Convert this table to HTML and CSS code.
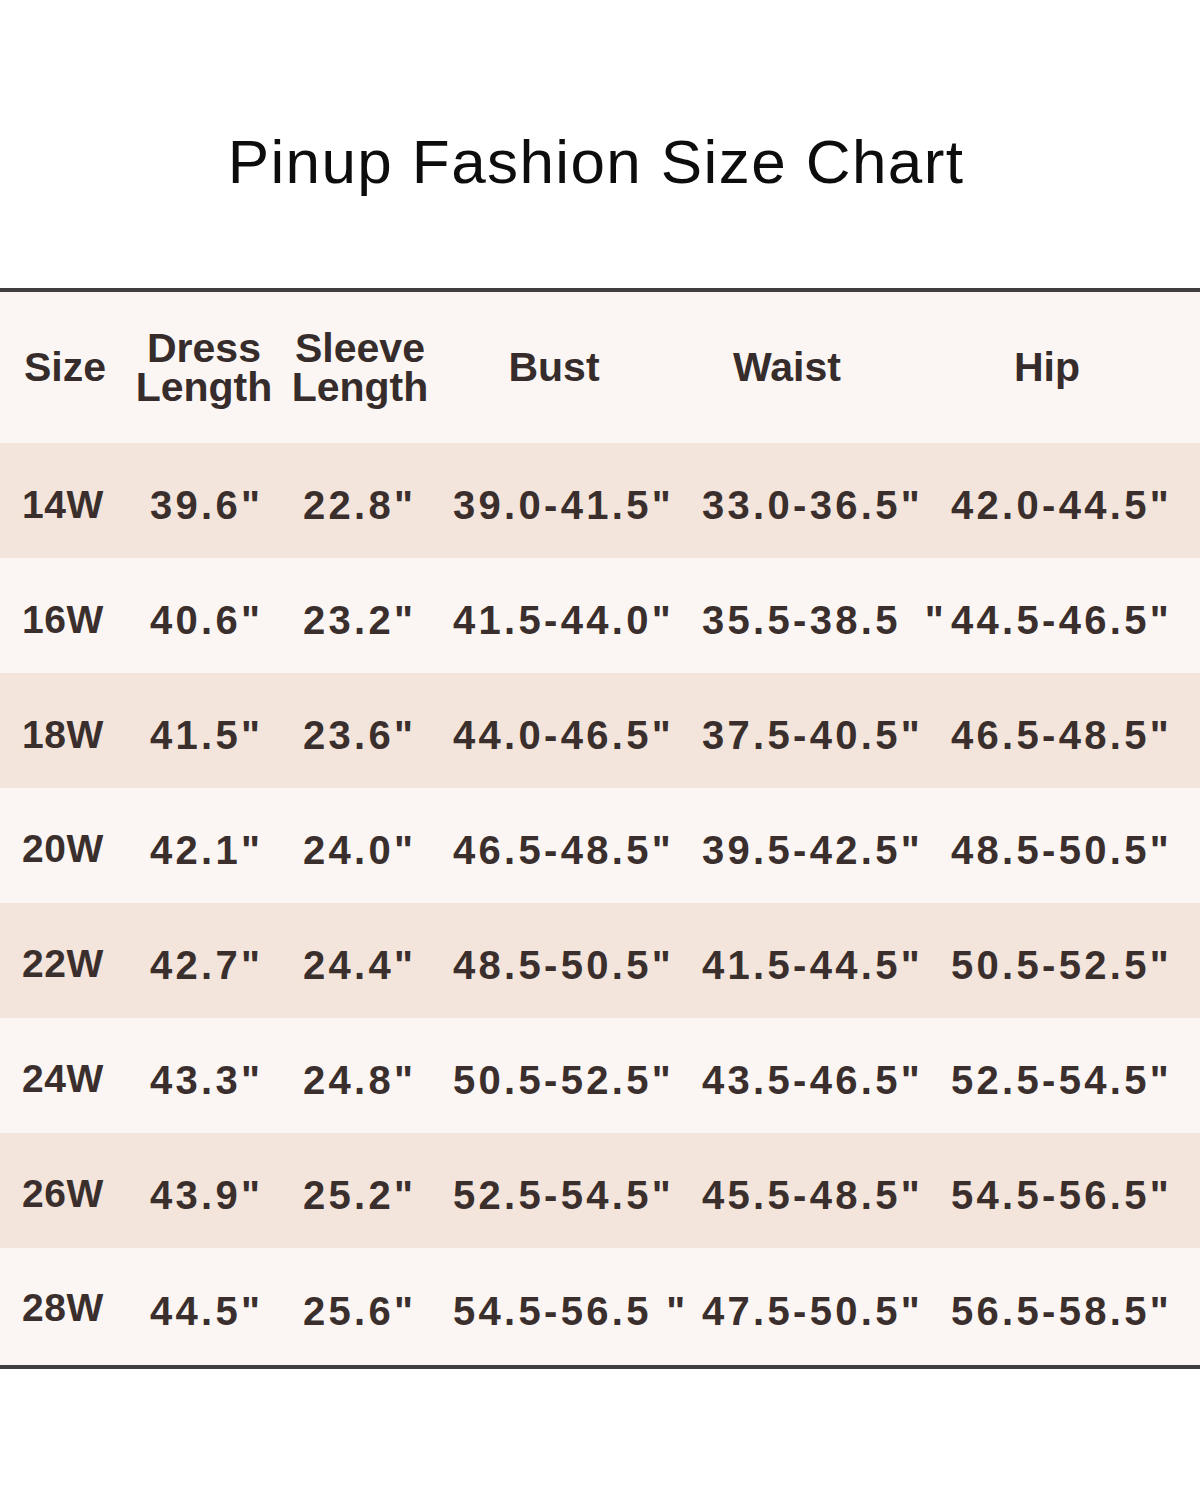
FILE: index.html
```html
<!DOCTYPE html>
<html lang="en">
<head>
<meta charset="utf-8">
<title>Pinup Fashion Size Chart</title>
<link rel="stylesheet" href="styles.css">
</head>
<body>
<div class="page">
  <h1 class="title">Pinup Fashion Size Chart</h1>
  <div class="chart">
    <div class="row head">
      <div class="c c1"><span class="ln">Size</span></div>
      <div class="c c2"><span class="ln">Dress</span><span class="ln">Length</span></div>
      <div class="c c3"><span class="ln">Sleeve</span><span class="ln">Length</span></div>
      <div class="c c4"><span class="ln">Bust</span></div>
      <div class="c c5"><span class="ln">Waist</span></div>
      <div class="c c6"><span class="ln">Hip</span></div>
    </div>
    <div class="row alt">
      <div class="c c1 sz">14W</div><div class="c c2">39.6"</div><div class="c c3">22.8"</div><div class="c c4">39.0-41.5"</div><div class="c c5">33.0-36.5"</div><div class="c c6">42.0-44.5"</div>
    </div>
    <div class="row">
      <div class="c c1 sz">16W</div><div class="c c2">40.6"</div><div class="c c3">23.2"</div><div class="c c4">41.5-44.0"</div><div class="c c5">35.5-38.5<span class="gap"></span>"</div><div class="c c6">44.5-46.5"</div>
    </div>
    <div class="row alt">
      <div class="c c1 sz">18W</div><div class="c c2">41.5"</div><div class="c c3">23.6"</div><div class="c c4">44.0-46.5"</div><div class="c c5">37.5-40.5"</div><div class="c c6">46.5-48.5"</div>
    </div>
    <div class="row">
      <div class="c c1 sz mid">20W</div><div class="c c2">42.1"</div><div class="c c3">24.0"</div><div class="c c4">46.5-48.5"</div><div class="c c5">39.5-42.5"</div><div class="c c6">48.5-50.5"</div>
    </div>
    <div class="row alt">
      <div class="c c1 sz mid">22W</div><div class="c c2">42.7"</div><div class="c c3">24.4"</div><div class="c c4">48.5-50.5"</div><div class="c c5">41.5-44.5"</div><div class="c c6">50.5-52.5"</div>
    </div>
    <div class="row">
      <div class="c c1 sz mid">24W</div><div class="c c2">43.3"</div><div class="c c3">24.8"</div><div class="c c4">50.5-52.5"</div><div class="c c5">43.5-46.5"</div><div class="c c6">52.5-54.5"</div>
    </div>
    <div class="row alt">
      <div class="c c1 sz mid">26W</div><div class="c c2">43.9"</div><div class="c c3">25.2"</div><div class="c c4">52.5-54.5"</div><div class="c c5">45.5-48.5"</div><div class="c c6">54.5-56.5"</div>
    </div>
    <div class="row last">
      <div class="c c1 sz up">28W</div><div class="c c2">44.5"</div><div class="c c3">25.6"</div><div class="c c4">54.5-56.5 "</div><div class="c c5">47.5-50.5"</div><div class="c c6">56.5-58.5"</div>
    </div>
  </div>
</div>
</body>
</html>
```

FILE: styles.css
```css
html, body {
  margin: 0;
  padding: 0;
  background: #ffffff;
}

.page {
  width: 1200px;
  height: 1500px;
  font-family: "Liberation Sans", Arial, sans-serif;
  color: #3a2f2d;
}

.title {
  margin: 0;
  padding-top: 126px;
  padding-right: 8px;
  height: 288px;
  box-sizing: border-box;
  text-align: center;
  font-weight: 400;
  font-size: 62px;
  letter-spacing: 1.4px;
  line-height: 72px;
  color: #0d0d0d;
}

.chart {
  border-top: 4px solid #403e3e;
  border-bottom: 4px solid #403e3e;
}

.row {
  display: grid;
  grid-template-columns: 130px 150px 160px 250px 250px 260px;
  height: 115px;
  background: #fbf6f3;
  align-items: center;
}

.row.alt {
  background: #f3e5dc;
}

.row.last {
  height: 117px;
}

.row.head {
  height: 151px;
}

.c {
  font-weight: 700;
  font-size: 40px;
  letter-spacing: 3.3px;
  white-space: nowrap;
  padding-top: 10px;
}

.c.sz {
  font-size: 39px;
  letter-spacing: 0.6px;
  padding-top: 8px;
}

.c.sz.mid {
  padding-top: 6px;
}

.c.sz.up {
  padding-top: 2px;
}

.gap {
  display: inline-block;
  width: 24px;
}

.c1 { padding-left: 22px; }
.c2 { padding-left: 20px; }
.c3 { padding-left: 23px; }
.c4 { padding-left: 13px; }
.c5 { padding-left: 12px; }
.c6 { padding-left: 11px; }

.head .c {
  font-size: 41px;
  letter-spacing: 0;
  text-align: center;
  padding-top: 0;
  color: #352c2b;
}

.ln {
  display: block;
  line-height: 39px;
}

.head .c1 { text-align: left; padding-left: 24px; }
.head .c2 { padding-left: 0; padding-right: 2px; }
.head .c3 { padding-left: 0; padding-right: 0; }
.head .c4 { padding-left: 0; padding-right: 22px; }
.head .c5 { padding-left: 0; padding-right: 56px; }
.head .c6 { padding-left: 0; padding-right: 46px; }
```
